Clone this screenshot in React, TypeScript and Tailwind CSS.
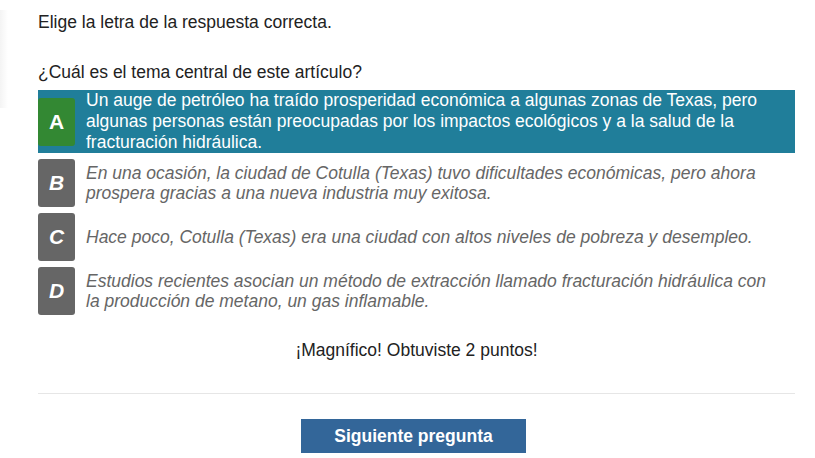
import React from 'react';

interface Choice {
  letter: string;
  text: string;
  correct?: boolean;
}

const choices: Choice[] = [
  {
    letter: 'A',
    text: 'Un auge de petróleo ha traído prosperidad económica a algunas zonas de Texas, pero algunas personas están preocupadas por los impactos ecológicos y a la salud de la fracturación hidráulica.',
    correct: true,
  },
  {
    letter: 'B',
    text: 'En una ocasión, la ciudad de Cotulla (Texas) tuvo dificultades económicas, pero ahora prospera gracias a una nueva industria muy exitosa.',
  },
  {
    letter: 'C',
    text: 'Hace poco, Cotulla (Texas) era una ciudad con altos niveles de pobreza y desempleo.',
  },
  {
    letter: 'D',
    text: 'Estudios recientes asocian un método de extracción llamado fracturación hidráulica con la producción de metano, un gas inflamable.',
  },
];

const ChoiceRow: React.FC<{ choice: Choice }> = ({ choice }) => {
  if (choice.correct) {
    return (
      <div className="flex items-center gap-[11px] bg-[#207e9a] pr-5">
        <div className="flex h-[48px] w-[37px] shrink-0 items-center justify-center rounded-[3px] bg-[#338833] text-[21px] font-bold text-white">
          {choice.letter}
        </div>
        <p className="text-[17.5px] leading-[21px] text-white">{choice.text}</p>
      </div>
    );
  }
  return (
    <div className="flex items-center gap-[11px] pr-5">
      <div className="flex h-[48px] w-[37px] shrink-0 items-center justify-center rounded-[3px] bg-[#666666] text-[21px] font-bold italic text-white">
        {choice.letter}
      </div>
      <p className="text-[17.5px] italic leading-[20px] text-[#666666]">{choice.text}</p>
    </div>
  );
};

export default function App() {
  return (
    <div className="relative min-h-[458px] w-full bg-white font-['Liberation_Sans',Arial,sans-serif] text-[#222222]">
      {/* faint panel edge on the left */}
      <div className="absolute left-0 top-[10px] h-[98px] w-[8px] bg-gradient-to-r from-[#f4f4f4] to-white" />

      <div className="mx-[38px] w-[757px] pt-[12px]">
        <p className="text-[17.5px] leading-[20px]">Elige la letra de la respuesta correcta.</p>
        <p className="mt-[30px] text-[17.5px] leading-[20px]">¿Cuál es el tema central de este artículo?</p>

        <div className="mt-[8px] flex flex-col gap-[6px]">
          {choices.map((c) => (
            <ChoiceRow key={c.letter} choice={c} />
          ))}
        </div>

        <p className="mt-[25px] text-center text-[17.5px] leading-[20px]">¡Magnífico! Obtuviste 2 puntos!</p>

        <div className="mt-[33px] border-t border-[#e6e6e6]" />

        <div className="mt-[25px] flex justify-center">
          <button className="ml-[-6px] h-[34px] w-[225px] bg-[#336699] text-[17.5px] font-bold text-white">
            Siguiente pregunta
          </button>
        </div>
      </div>
    </div>
  );
}
